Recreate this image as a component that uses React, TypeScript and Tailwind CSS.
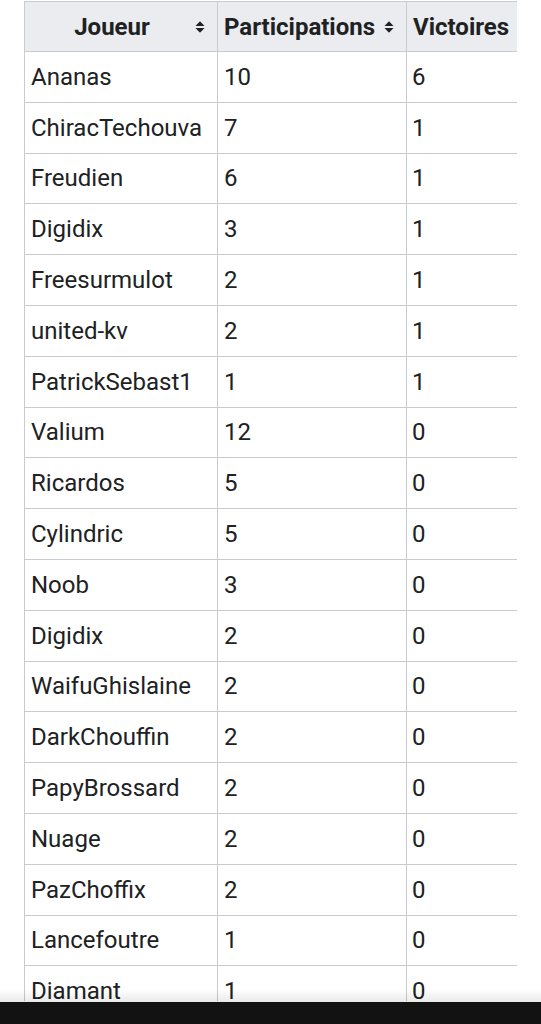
const rows: [string, number, number][] = [
  ['Ananas', 10, 6],
  ['ChiracTechouva', 7, 1],
  ['Freudien', 6, 1],
  ['Digidix', 3, 1],
  ['Freesurmulot', 2, 1],
  ['united-kv', 2, 1],
  ['PatrickSebast1', 1, 1],
  ['Valium', 12, 0],
  ['Ricardos', 5, 0],
  ['Cylindric', 5, 0],
  ['Noob', 3, 0],
  ['Digidix', 2, 0],
  ['WaifuGhislaine', 2, 0],
  ['DarkChouffin', 2, 0],
  ['PapyBrossard', 2, 0],
  ['Nuage', 2, 0],
  ['PazChoffix', 2, 0],
  ['Lancefoutre', 1, 0],
  ['Diamant', 1, 0],
];

function SortIcon() {
  return (
    <svg width="10" height="14" viewBox="0 0 10 14" className="shrink-0">
      <path d="M0.5 6 L5 1.2 L9.5 6 Z" fill="#202122" />
      <path d="M0.5 8 L5 12.8 L9.5 8 Z" fill="#202122" />
    </svg>
  );
}

export default function App() {
  return (
    <div
      className="h-[1024px] flex flex-col bg-white overflow-hidden text-[#202122]"
      style={{ fontFamily: 'Roboto, "Noto Sans", sans-serif' }}
    >
      <div className="flex-1 relative overflow-hidden pl-[24px] pt-[1px]">
        <div className="w-[493px] overflow-hidden border-l border-t border-[#c8ccd1]">
          <div className="w-[560px]">
            {/* header */}
            <div className="flex h-[50px] bg-[#eaecf0] border-b border-[#c8ccd1] text-[24px] font-bold">
              <div className="w-[193px] flex items-center border-r border-[#c8ccd1] pl-[4px] pr-[12px]">
                <span className="flex-1 text-center">Joueur</span>
                <SortIcon />
              </div>
              <div className="w-[189px] flex items-center gap-[9px] border-r border-[#c8ccd1] pl-[6px]">
                <span>Participations</span>
                <SortIcon />
              </div>
              <div className="w-[160px] flex items-center gap-[9px] pl-[6px]">
                <span>Victoires</span>
                <SortIcon />
              </div>
            </div>
            {/* body */}
            {rows.map(([name, parts, wins], i) => (
              <div key={i} className="flex h-[50.8px] border-b border-[#c8ccd1] text-[24px]">
                <div className="w-[193px] flex items-center border-r border-[#c8ccd1] pl-[6px]">{name}</div>
                <div className="w-[189px] flex items-center border-r border-[#c8ccd1] pl-[6px]">{parts}</div>
                <div className="w-[160px] flex items-center pl-[5px]">{wins}</div>
              </div>
            ))}
          </div>
        </div>
        <div className="absolute bottom-0 inset-x-0 h-[12px] bg-linear-to-b from-transparent to-[#00000014]" />
      </div>
      <div className="h-[23px] bg-[#121212] border-t border-[#e8e8e8]" />
    </div>
  );
}
